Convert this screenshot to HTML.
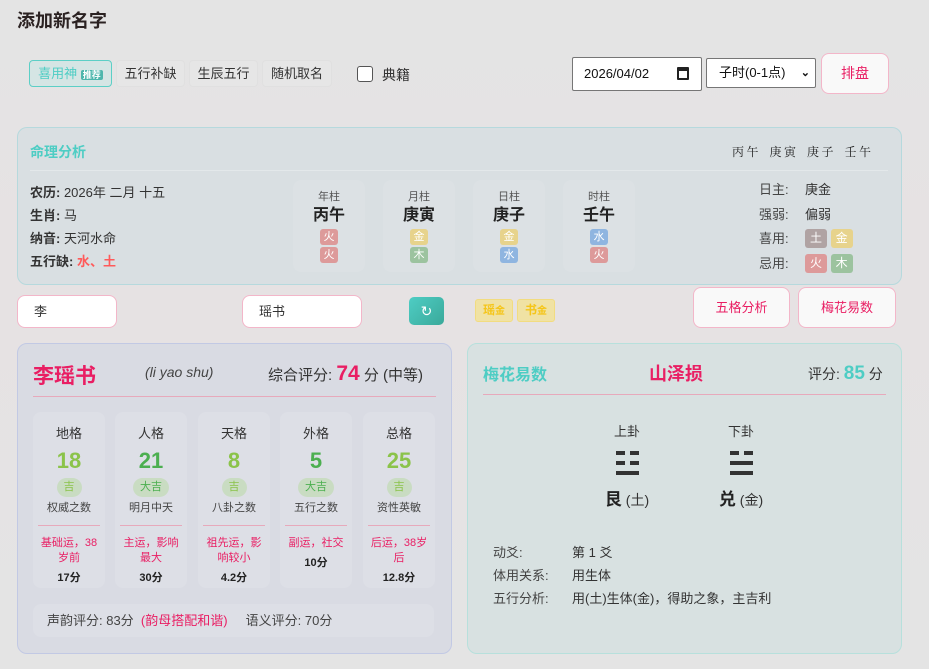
<!DOCTYPE html>
<html><head><meta charset="utf-8">
<style>
*{box-sizing:border-box;margin:0;padding:0}
body{width:929px;height:669px;overflow:hidden;background:linear-gradient(180deg,#e4e4e4 0%,#e6e2e3 40%,#e4e4e4 100%);font-family:"Liberation Sans","Noto Sans CJK SC",sans-serif;color:#333;position:relative;font-size:13px}
.a{position:absolute}
.c{text-align:center}
.tab{position:absolute;top:60px;height:27px;border:1px solid #e0e0e0;border-radius:4px;background:#e6e6e6;font-size:13px;line-height:25px;text-align:center;color:#333}
.card{position:absolute;border-radius:10px}
.b{display:inline-block;width:18px;height:16px;border-radius:3px;color:#fff;font-size:11px;line-height:16px;text-align:center}
.fire{background:#dd9a9a}.gold{background:#e7d38c}.wood{background:#9cc39f}.water{background:#8fb5e0}.earth{background:#b0a3a3}
.pil{position:absolute;top:180px;width:72px;height:92px;border-radius:8px;background:rgba(255,255,255,0.08);text-align:center}
.pil .l{font-size:11px;color:#555;margin-top:8px}
.pil .g{font-size:16px;font-weight:bold;color:#222;margin-top:1px;line-height:22px}
.pil .b{display:block;margin:2px auto 0}
.inp{position:absolute;top:295px;height:33px;border:1px solid #f3b6c9;border-radius:8px;background:#fff;font-size:13px;line-height:31px;padding-left:16px;color:#333}
.pbtn{position:absolute;border:1px solid #f3b6c9;border-radius:8px;background:#f9f9f9;color:#e91e63;text-align:center;font-size:13px}
.ge{position:absolute;top:412px;width:72px;height:176px;border-radius:8px;background:rgba(255,255,255,0.12);text-align:center}
.ge .t{font-size:13px;color:#333;margin-top:11px}
.ge .n{font-size:22px;font-weight:bold;color:#8bc34a;line-height:26px;margin-top:6px}
.ge .j{display:inline-block;border-radius:10px;background:#c9dcc2;color:#8bc34a;font-size:11px;line-height:19px;padding:0 7px;margin-top:4px}
.ge .d{font-size:11px;color:#444;margin-top:2px}
.ge .s{height:1px;background:#e7a9bb;margin:10px 5px 10px}
.ge .r{font-size:11px;color:#e91e63;line-height:15px;padding:0 5px}
.ge .sc{font-size:11px;font-weight:bold;color:#222;margin-top:3px}
.yao{position:absolute;height:3px;background:#333}
</style></head><body>
<div class="a" style="left:17px;top:7px;font-size:18px;font-weight:bold;color:#2b2222">添加新名字</div>

<div class="tab" style="left:29px;width:83px;border-color:#5ccfc6;background:#d5e5e4;color:#4ecdc4">喜用神 <span style="background:#4db6ac;color:#fff;font-size:9px;padding:0 2px;border-radius:2px;font-weight:bold">推荐</span></div>
<div class="tab" style="left:116px;width:69px">五行补缺</div>
<div class="tab" style="left:189px;width:69px">生辰五行</div>
<div class="tab" style="left:262px;width:70px">随机取名</div>
<div class="a" style="left:357px;top:66px;width:16px;height:16px;border:1px solid #555;border-radius:3px;background:#fff"></div>
<div class="a" style="left:382px;top:65px;font-size:14px;color:#333">典籍</div>

<div class="a" style="left:572px;top:57px;width:130px;height:34px;border:1px solid #767676;background:#fff;border-radius:2px;font-size:13px;line-height:32px;padding-left:11px;color:#111">2026/04/02<span style="position:absolute;right:12px;top:9px;width:12px;height:13px;border:2px solid #222;border-top-width:4px;border-radius:1px"></span></div>
<div class="a" style="left:706px;top:58px;width:110px;height:30px;border:1px solid #767676;background:#fff;border-radius:2px;font-size:13px;line-height:28px;padding-left:12px;color:#111">子时(0-1点)<span style="position:absolute;right:5px;top:0;font-size:11px;font-weight:bold">⌄</span></div>
<div class="pbtn" style="left:821px;top:53px;width:68px;height:41px;line-height:39px;font-size:14px">排盘</div>

<div class="card" style="left:17px;top:127px;width:885px;height:158px;background:#d9dfe2;border:1px solid #b6d9dd"></div>
<div class="a" style="left:30px;top:142px;font-size:14px;font-weight:bold;color:#4ecdc4">命理分析</div>
<div class="a" style="left:732px;top:143px;font-size:12px;color:#222;font-family:'Liberation Serif','Noto Serif CJK SC',serif;letter-spacing:2.5px;word-spacing:3px">丙午 庚寅 庚子 壬午</div>
<div class="a" style="left:30px;top:170px;width:858px;height:1px;background:#e3e8ea"></div>
<div class="a" style="left:30px;top:181px;font-size:13px;line-height:23px;color:#333">
<div><b>农历:</b> 2026年 二月 十五</div><div><b>生肖:</b> 马</div><div><b>纳音:</b> 天河水命</div><div><b>五行缺:</b> <span style="color:#ff5a5a;font-weight:bold">水、土</span></div></div>
<div class="pil" style="left:293px"><div class="l">年柱</div><div class="g">丙午</div><span class="b fire">火</span><span class="b fire">火</span></div>
<div class="pil" style="left:383px"><div class="l">月柱</div><div class="g">庚寅</div><span class="b gold">金</span><span class="b wood">木</span></div>
<div class="pil" style="left:473px"><div class="l">日柱</div><div class="g">庚子</div><span class="b gold">金</span><span class="b water">水</span></div>
<div class="pil" style="left:563px"><div class="l">时柱</div><div class="g">壬午</div><span class="b water">水</span><span class="b fire">火</span></div>
<div class="a" style="left:759px;top:178px;font-size:13px;color:#444;line-height:24.5px">日主:<br>强弱:<br>喜用:<br>忌用:</div>
<div class="a" style="left:805px;top:178px;font-size:13px;color:#333;line-height:24.5px">庚金<br>偏弱</div>
<div class="a" style="left:805px;top:229px"><span class="b earth" style="width:22px;height:19px;line-height:19px;font-size:12px">土</span> <span class="b gold" style="width:22px;height:19px;line-height:19px;font-size:12px">金</span></div>
<div class="a" style="left:805px;top:254px"><span class="b fire" style="width:22px;height:19px;line-height:19px;font-size:12px">火</span> <span class="b wood" style="width:22px;height:19px;line-height:19px;font-size:12px">木</span></div>

<div class="inp" style="left:17px;width:100px">李</div>
<div class="inp" style="left:242px;width:120px">瑶书</div>
<div class="a" style="left:409px;top:297px;width:35px;height:28px;border-radius:5px;background:linear-gradient(135deg,#4ecdc4,#3aa99a);color:#fff;text-align:center;line-height:28px;font-size:14px">↻</div>
<div class="a" style="left:475px;top:299px;width:38px;height:23px;border:1px solid #f2dc80;background:#f0e2a4;border-radius:3px;color:#f5c518;font-size:12px;line-height:21px;text-align:center;font-weight:bold">瑶<span style="font-size:10px">金</span></div>
<div class="a" style="left:517px;top:299px;width:38px;height:23px;border:1px solid #f2dc80;background:#f0e2a4;border-radius:3px;color:#f5c518;font-size:12px;line-height:21px;text-align:center;font-weight:bold">书<span style="font-size:10px">金</span></div>
<div class="pbtn" style="left:693px;top:287px;width:97px;height:41px;line-height:39px">五格分析</div>
<div class="pbtn" style="left:798px;top:287px;width:98px;height:41px;line-height:39px">梅花易数</div>

<div class="card" style="left:17px;top:343px;width:435px;height:311px;background:#d9dbe3;border:1px solid #c2c9e4"></div>
<div class="a" style="left:33px;top:360px;font-size:21px;font-weight:bold;color:#e91e63">李瑶书</div>
<div class="a" style="left:145px;top:364px;font-size:14px;font-style:italic;color:#444">(li yao shu)</div>
<div class="a" style="left:268px;top:362px;font-size:15px;color:#333">综合评分: <span style="font-size:21px;font-weight:bold;color:#e91e63">74</span> 分 (中等)</div>
<div class="a" style="left:33px;top:396px;width:403px;height:1px;background:#e7a9bb"></div>

<div class="ge" style="left:33px"><div class="t">地格</div><div class="n">18</div><span class="j">吉</span><div class="d">权威之数</div><div class="s"></div><div class="r">基础运，38岁前</div><div class="sc">17分</div></div>
<div class="ge" style="left:115px"><div class="t">人格</div><div class="n" style="color:#4caf50">21</div><span class="j" style="color:#4caf50">大吉</span><div class="d">明月中天</div><div class="s"></div><div class="r">主运，影响最大</div><div class="sc">30分</div></div>
<div class="ge" style="left:198px"><div class="t">天格</div><div class="n">8</div><span class="j">吉</span><div class="d">八卦之数</div><div class="s"></div><div class="r">祖先运，影响较小</div><div class="sc">4.2分</div></div>
<div class="ge" style="left:280px"><div class="t">外格</div><div class="n" style="color:#4caf50">5</div><span class="j" style="color:#4caf50">大吉</span><div class="d">五行之数</div><div class="s"></div><div class="r">副运，社交</div><div class="sc">10分</div></div>
<div class="ge" style="left:363px"><div class="t">总格</div><div class="n">25</div><span class="j">吉</span><div class="d">资性英敏</div><div class="s"></div><div class="r">后运，38岁后</div><div class="sc">12.8分</div></div>

<div class="a" style="left:33px;top:604px;width:401px;height:33px;border-radius:8px;background:rgba(255,255,255,0.12);font-size:13px;line-height:33px;padding-left:14px;color:#444">声韵评分: 83分 &nbsp;<span style="color:#e91e63">(韵母搭配和谐)</span>&nbsp;&nbsp;&nbsp;&nbsp; 语义评分: 70分</div>

<div class="card" style="left:467px;top:343px;width:435px;height:311px;background:#d8e1e1;border:1px solid #b7e0dc"></div>
<div class="a" style="left:483px;top:361px;font-size:16px;font-weight:bold;color:#4ecdc4">梅花易数</div>
<div class="a" style="left:649px;top:360px;font-size:18px;font-weight:bold;color:#e91e63">山泽损</div>
<div class="a" style="left:808px;top:363px;font-size:14px;color:#333">评分: <span style="font-size:19px;font-weight:bold;color:#4ecdc4">85</span> 分</div>
<div class="a" style="left:483px;top:394px;width:403px;height:1px;background:#e7a9bb"></div>

<div class="a c" style="left:597px;top:421px;width:60px;font-size:13px;color:#333">上卦</div>
<div class="yao" style="left:616px;top:451px;width:9px;height:4px"></div><div class="yao" style="left:630px;top:451px;width:9px;height:4px"></div>
<div class="yao" style="left:616px;top:461px;width:9px;height:4px"></div><div class="yao" style="left:630px;top:461px;width:9px;height:4px"></div>
<div class="yao" style="left:616px;top:471px;width:23px;height:4px"></div>
<div class="a c" style="left:587px;top:485px;width:80px;font-size:14px;color:#333"><b style="font-size:17px;color:#222">艮</b> (土)</div>
<div class="a c" style="left:711px;top:421px;width:60px;font-size:13px;color:#333">下卦</div>
<div class="yao" style="left:730px;top:451px;width:9px;height:4px"></div><div class="yao" style="left:744px;top:451px;width:9px;height:4px"></div>
<div class="yao" style="left:730px;top:461px;width:23px;height:4px"></div>
<div class="yao" style="left:730px;top:471px;width:23px;height:4px"></div>
<div class="a c" style="left:701px;top:485px;width:80px;font-size:14px;color:#333"><b style="font-size:17px;color:#222">兑</b> (金)</div>

<div class="a" style="left:493px;top:541px;font-size:13px;line-height:23px;color:#444">动爻:<br>体用关系:<br>五行分析:</div>
<div class="a" style="left:572px;top:541px;font-size:13px;line-height:23px;color:#333">第 1 爻<br>用生体<br>用(土)生体(金)，得助之象，主吉利</div>
</body></html>
